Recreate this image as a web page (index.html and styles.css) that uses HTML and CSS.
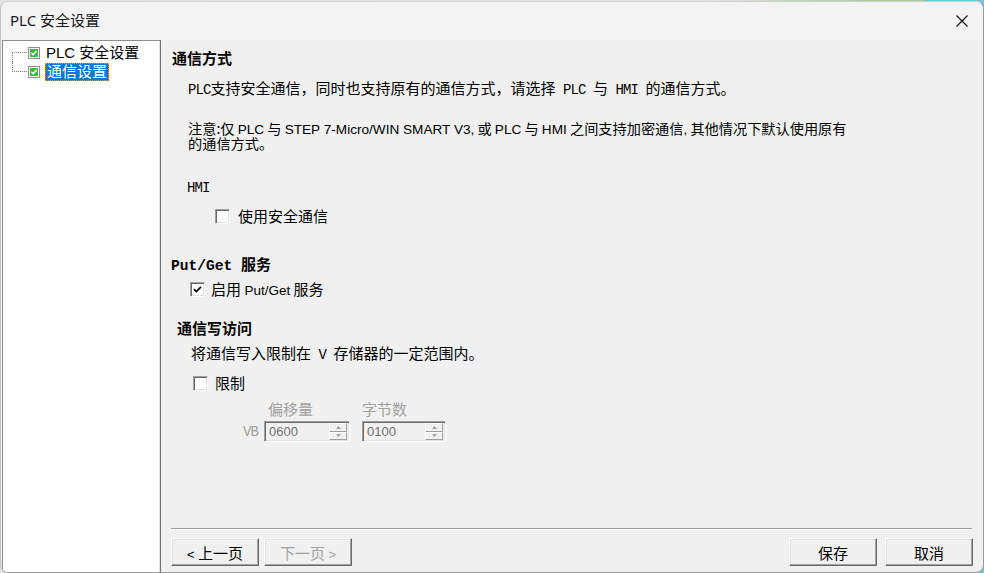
FILE: index.html
```html
<!DOCTYPE html>
<html lang="zh-CN">
<head>
<meta charset="utf-8">
<title>PLC 安全设置</title>
<link rel="stylesheet" href="styles.css">
</head>
<body>
<div class="window">
  <div class="titlebar">
    <span class="title">PLC 安全设置</span>
    <svg class="close" width="12" height="12" viewBox="0 0 12 12"><path d="M0.5 0.5 L11.5 11.5 M11.5 0.5 L0.5 11.5" stroke="#111" stroke-width="1.1" fill="none"/></svg>
  </div>
  <div class="body">
    <div class="tree">
      <div class="node first">
        <span class="conn"></span>
        <span class="tcheck"><svg width="8" height="8" viewBox="0 0 8 8"><rect x="0" y="0" width="8" height="8" fill="#3dbb3d"/><path d="M1.4 4 L3.2 5.8 L6.6 2" stroke="#fff" stroke-width="1.4" fill="none"/></svg></span>
        <span class="tlabel">PLC 安全设置</span>
      </div>
      <div class="node last">
        <span class="conn"></span>
        <span class="tcheck"><svg width="8" height="8" viewBox="0 0 8 8"><rect x="0" y="0" width="8" height="8" fill="#3dbb3d"/><path d="M1.4 4 L3.2 5.8 L6.6 2" stroke="#fff" stroke-width="1.4" fill="none"/></svg></span>
        <span class="tlabel selected">通信设置</span>
      </div>
    </div>
    <div class="main">
      <div class="content">
        <div class="ss bold h-comm">通信方式</div>
        <div class="ss p-comm"><span class="lat">PLC</span>支持安全通信，同时也支持原有的通信方式，请选择<span class="lat"> PLC </span>与<span class="lat"> HMI </span>的通信方式。</div>
        <div class="note">
          <div class="nl">注意:仅 <span class="ui">PLC</span> 与 <span class="ui">STEP 7-Micro/WIN SMART V3,</span> 或 <span class="ui">PLC</span> 与 <span class="ui">HMI</span> 之间支持加密通信<span class="ui">,</span> 其他情况下默认使用原有</div>
          <div class="nl">的通信方式。</div>
        </div>
        <div class="ss hmi"><span class="lat">HMI</span></div>
        <label class="chkrow row-secure"><span class="chk"></span><span class="ss">使用安全通信</span></label>
        <div class="ss bold h-put"><span class="lat">Put/Get </span>服务</div>
        <label class="chkrow row-put"><span class="chk"><svg width="11" height="11" viewBox="0 0 11 11"><path d="M2 5.2 L4.3 7.6 L9 2.8" stroke="#000" stroke-width="1.7" fill="none"/></svg></span><span class="ss">启用 <span class="ui">Put/Get</span> 服务</span></label>
        <div class="ss bold h-write">通信写访问</div>
        <div class="ss p-write">将通信写入限制在<span class="lat"> V </span>存储器的一定范围内。</div>
        <label class="chkrow row-limit"><span class="chk"></span><span class="ss">限制</span></label>
        <div class="limits">
          <div class="ss dis lab1">偏移量</div>
          <div class="ss dis lab2">字节数</div>
          <div class="vb"><span class="lat">VB</span></div>
          <div class="spin sp1"><span class="val">0600</span><span class="arrows"><span class="ab"><svg width="5" height="3" viewBox="0 0 5 3"><path d="M0 3 L2.5 0 L5 3Z" fill="#a0a0a0"/></svg></span><span class="ab"><svg width="5" height="3" viewBox="0 0 5 3"><path d="M0 0 L2.5 3 L5 0Z" fill="#a0a0a0"/></svg></span></span></div>
          <div class="spin sp2"><span class="val">0100</span><span class="arrows"><span class="ab"><svg width="5" height="3" viewBox="0 0 5 3"><path d="M0 3 L2.5 0 L5 3Z" fill="#a0a0a0"/></svg></span><span class="ab"><svg width="5" height="3" viewBox="0 0 5 3"><path d="M0 0 L2.5 3 L5 0Z" fill="#a0a0a0"/></svg></span></span></div>
        </div>
      </div>
      <div class="sep"></div>
      <div class="buttons">
        <button class="btn"><span class="lt">&lt;</span> 上一页</button>
        <button class="btn disabled">下一页 <span class="lt">&gt;</span></button>
        <button class="btn save">保存</button>
        <button class="btn cancel">取消</button>
      </div>
    </div>
  </div>
</div>
</body>
</html>
```
FILE: styles.css
```css
html, body {
  margin: 0;
  padding: 0;
}
body {
  width: 984px;
  height: 573px;
  overflow: hidden;
  background: linear-gradient(to right, #e2e2e4 0, #e6dfe3 300px, #e4e4e4 700px, #a9c8a2 870px, #a9c8a2 922px, #72c6cf 926px, #72c6cf 984px);
  font-family: "Noto Sans CJK SC", sans-serif;
}
.window {
  margin-top: 1px;
  height: 572px;
  box-sizing: border-box;
  background: #f0f0f0;
  border: 1px solid #9a9a9a;
  border-left-color: #c4c4c4;
  border-top-color: #d0d0d0;
  border-radius: 8px;
  display: flex;
  flex-direction: column;
  overflow: hidden;
}
.titlebar {
  height: 38px;
  flex: none;
  display: flex;
  align-items: center;
  padding: 0 0 3px 9px;
  box-sizing: border-box;
  background: #f3f3f3;
}
.title {
  font-family: "Noto Sans", "Noto Sans CJK SC", sans-serif;
  font-size: 15px;
  color: #1a1a1a;
  flex: 1;
}
.close {
  margin-right: 15px;
  margin-top: 2px;
}
.body {
  flex: 1;
  display: flex;
  min-height: 0;
}
.tree {
  width: 159px;
  box-sizing: border-box;
  margin-left: 1px;
  background: #fff;
  border-top: 1px solid #8c8c8c;
  border-left: 1px solid #8c8c8c;
  border-right: 1px solid #6e6e6e;
  box-shadow: inset -1px 0 0 #e3e3e3;
  padding-top: 2px;
}
.node {
  height: 19px;
  display: flex;
  align-items: center;
  font-size: 15px;
  line-height: 19px;
}
.conn {
  width: 25px;
  height: 19px;
  position: relative;
  flex: none;
}
.conn::before {
  content: "";
  position: absolute;
  left: 9px;
  width: 15px;
  top: 9px;
  border-top: 1px dotted #7a7a7a;
}
.conn::after {
  content: "";
  position: absolute;
  left: 9px;
  border-left: 1px dotted #7a7a7a;
}
.first .conn::after {
  top: 9px;
  bottom: 0;
}
.last .conn::after {
  top: 0;
  height: 10px;
}
.tcheck {
  width: 12px;
  height: 12px;
  box-sizing: border-box;
  border: 1px solid #909090;
  display: flex;
  align-items: center;
  justify-content: center;
  background: #fff;
  flex: none;
}
.tcheck svg {
  display: block;
}
.tlabel {
  margin-left: 6px;
  font-family: "Liberation Sans", "Noto Sans CJK SC", sans-serif;
  color: #000;
  white-space: nowrap;
}
.tlabel.selected {
  margin-left: 5px;
  padding: 0 2px;
  background: #0078d7;
  color: #fff;
  outline: 1px dotted #f0a000;
  outline-offset: -1px;
  line-height: 18px;
}
.main {
  flex: 1;
  display: flex;
  flex-direction: column;
  padding: 0 11px 6px 10px;
  min-width: 0;
}
.content {
  flex: 1;
  padding-top: 8px;
  display: flex;
  flex-direction: column;
  align-items: flex-start;
}
.ss {
  font-family: "Noto Sans CJK SC", sans-serif;
  font-size: 15px;
  line-height: 20px;
  height: 20px;
  color: #000;
  white-space: pre;
}
.lat {
  font-family: "Liberation Mono", monospace;
  font-size: 14px;
  letter-spacing: -0.9px;
  line-height: 0;
}
.ui {
  font-family: "Liberation Sans", sans-serif;
  font-size: 13.6px;
  line-height: 0;
}
.bold {
  font-weight: 700;
}
.bold .lat {
  font-weight: 700;
  font-size: 14.6px;
  letter-spacing: 0;
}
.h-comm {
  margin-left: 1px;
}
.p-comm {
  margin-top: 10px;
  margin-left: 17px;
}
.note {
  margin-top: 23px;
  margin-left: 17px;
  font-family: "Noto Sans CJK SC", sans-serif;
  font-size: 14.2px;
  color: #000;
  white-space: nowrap;
}
.nl {
  height: 15px;
  line-height: 15px;
}
.hmi {
  margin-top: 25px;
  margin-left: 16px;
}
.chkrow {
  display: flex;
  align-items: center;
  height: 20px;
}
.chk {
  width: 15px;
  height: 15px;
  box-sizing: border-box;
  background: #fff;
  border: 1px solid;
  border-color: #a0a0a0 #fff #fff #a0a0a0;
  box-shadow: inset 1px 1px 0 #696969, inset -1px -1px 0 #e3e3e3;
  display: flex;
  align-items: center;
  justify-content: center;
  flex: none;
}
.chk svg {
  display: block;
}
.row-secure {
  margin-top: 10px;
  margin-left: 44px;
}
.row-secure .chk {
  margin-right: 8px;
}
.h-put {
  margin-top: 28px;
}
.row-put {
  margin-top: 5px;
  margin-left: 19px;
}
.row-put .chk {
  margin-right: 6px;
}
.row-put .ui {
  font-size: 13.5px;
}
.h-write {
  margin-top: 19px;
  margin-left: 6px;
}
.p-write {
  margin-top: 5px;
  margin-left: 20px;
}
.row-limit {
  margin-top: 10px;
  margin-left: 22px;
}
.row-limit .chk {
  margin-right: 7px;
}
.limits {
  margin-top: 6px;
  margin-left: 72px;
  display: grid;
  grid-template-columns: 21px 86px 12px 84px;
  grid-template-rows: 22px 21px;
}
.dis {
  color: #a0a0a0;
}
.lab1 {
  grid-column: 2;
  grid-row: 1;
  padding-left: 4px;
}
.lab2 {
  grid-column: 4;
  grid-row: 1;
}
.vb {
  grid-column: 1;
  grid-row: 2;
  color: #a0a0a0;
  display: flex;
  align-items: center;
  font-size: 15px;
}
.vb .lat {
  line-height: 20px;
}
.spin {
  grid-row: 2;
  box-sizing: border-box;
  height: 21px;
  border: 1px solid;
  border-color: #a0a0a0 #fff #fff #a0a0a0;
  box-shadow: inset 1px 1px 0 #696969, inset -1px -1px 0 #e3e3e3;
  background: #f0f0f0;
  display: flex;
  align-items: stretch;
  padding: 1px 2px 1px 1px;
}
.sp1 {
  grid-column: 2;
}
.sp2 {
  grid-column: 4;
}
.val {
  flex: 1;
  font-family: "Liberation Sans", sans-serif;
  font-size: 13px;
  line-height: 17px;
  color: #707070;
  padding-left: 3px;
}
.arrows {
  width: 18px;
  display: flex;
  flex-direction: column;
}
.ab {
  flex: 1;
  box-sizing: border-box;
  border: 1px solid;
  border-color: #fff #a0a0a0 #a0a0a0 #fff;
  display: flex;
  align-items: center;
  justify-content: center;
  background: #f0f0f0;
}
.ab svg {
  display: block;
}
.sep {
  height: 0;
  border-top: 1px solid #a0a0a0;
  border-bottom: 1px solid #fff;
  flex: none;
}
.buttons {
  margin-top: 8px;
  display: flex;
  flex: none;
}
.btn {
  width: 88px;
  height: 28px;
  box-sizing: border-box;
  margin: 0;
  padding: 0;
  background: #f0f0f0;
  border: 1px solid;
  border-color: #fff #696969 #696969 #fff;
  box-shadow: inset -1px -1px 0 #a0a0a0, inset 1px 1px 0 #e3e3e3;
  font-family: "Noto Sans CJK SC", sans-serif;
  font-size: 15px;
  color: #000;
  border-radius: 0;
}
.lt {
  font-family: "Liberation Sans", sans-serif;
  font-size: 13px;
}
.btn.disabled {
  margin-left: 5px;
  color: #a0a0a0;
}
.btn.save {
  margin-left: auto;
}
.btn.cancel {
  margin-left: 8px;
  margin-right: -1px;
}
```
